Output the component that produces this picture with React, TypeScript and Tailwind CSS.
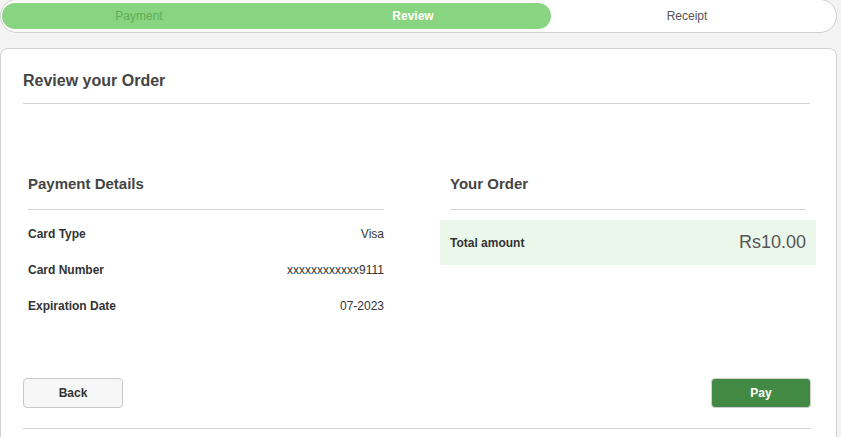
import React from "react";

export default function App() {
  const rows = [
    { label: "Card Type", value: "Visa" },
    { label: "Card Number", value: "xxxxxxxxxxxx9111" },
    { label: "Expiration Date", value: "07-2023" },
  ];
  return (
    <div
      className="w-[841px] h-[437px] overflow-hidden bg-[#f3f3f3] text-[#333]"
      style={{ fontFamily: '"Liberation Sans", Arial, sans-serif' }}
    >
      {/* Stepper */}
      <div className="-mt-px w-[837px] h-[34px] rounded-full border border-[#cfcfcf] bg-white pl-px pr-px py-[3px] relative">
        <div className="absolute left-[1px] top-[3px] w-[549px] h-[26px] rounded-full bg-[#88d480]" />
        <div className="relative flex h-[26px] text-[12px] leading-[26px]">
          <div className="w-[274px] text-center text-[#5fae57]">Payment</div>
          <div className="w-[274px] text-center font-bold text-white">Review</div>
          <div className="w-[274px] text-center text-[#555]">Receipt</div>
        </div>
      </div>

      {/* Card */}
      <div className="mt-[15px] w-[837px] h-[420px] rounded-t-[8px] border border-[#d0d0d0] bg-white px-[22px]">
        <div className="w-[787px] pt-[22px] pb-[12px] border-b border-[#d3d3d3] text-[16px] leading-[20px] font-bold text-[#444]">
          Review your Order
        </div>

        <div className="mt-[70px] -ml-[5px] flex gap-[46px]">
          <div className="w-[376px] shrink-0 px-[10px]">
            <div className="pb-[15px] border-b border-[#d3d3d3] text-[15px] leading-[20px] font-bold text-[#444]">
              Payment Details
            </div>
            <div className="pt-[6px]">
              {rows.map((r) => (
                <div key={r.label} className="h-[36px] flex items-center justify-between text-[12px]">
                  <span className="font-bold text-[#333]">{r.label}</span>
                  <span className="text-[#333]">{r.value}</span>
                </div>
              ))}
            </div>
          </div>
          <div className="w-[376px] shrink-0">
            <div className="mx-[10px] pb-[15px] border-b border-[#d3d3d3] text-[15px] leading-[20px] font-bold text-[#444]">
              Your Order
            </div>
            <div className="mt-[10px] h-[45px] bg-[#ecf7ec] px-[10px] flex items-center justify-between">
              <span className="text-[12px] font-bold text-[#333]">Total amount</span>
              <span className="text-[18px] text-[#555]">Rs10.00</span>
            </div>
          </div>
        </div>

        <div className="mt-[54px] w-[788px] pb-[20px] border-b border-[#d3d3d3] flex justify-between">
          <button className="w-[100px] h-[30px] rounded-[4px] border border-[#c8c8c8] bg-[#f7f7f7] text-[12px] font-bold text-[#333]">
            Back
          </button>
          <button className="w-[100px] h-[30px] rounded-[4px] border border-[#cfcfcf] bg-[#428a43] text-[12px] font-bold text-white">
            Pay
          </button>
        </div>
      </div>
    </div>
  );
}
